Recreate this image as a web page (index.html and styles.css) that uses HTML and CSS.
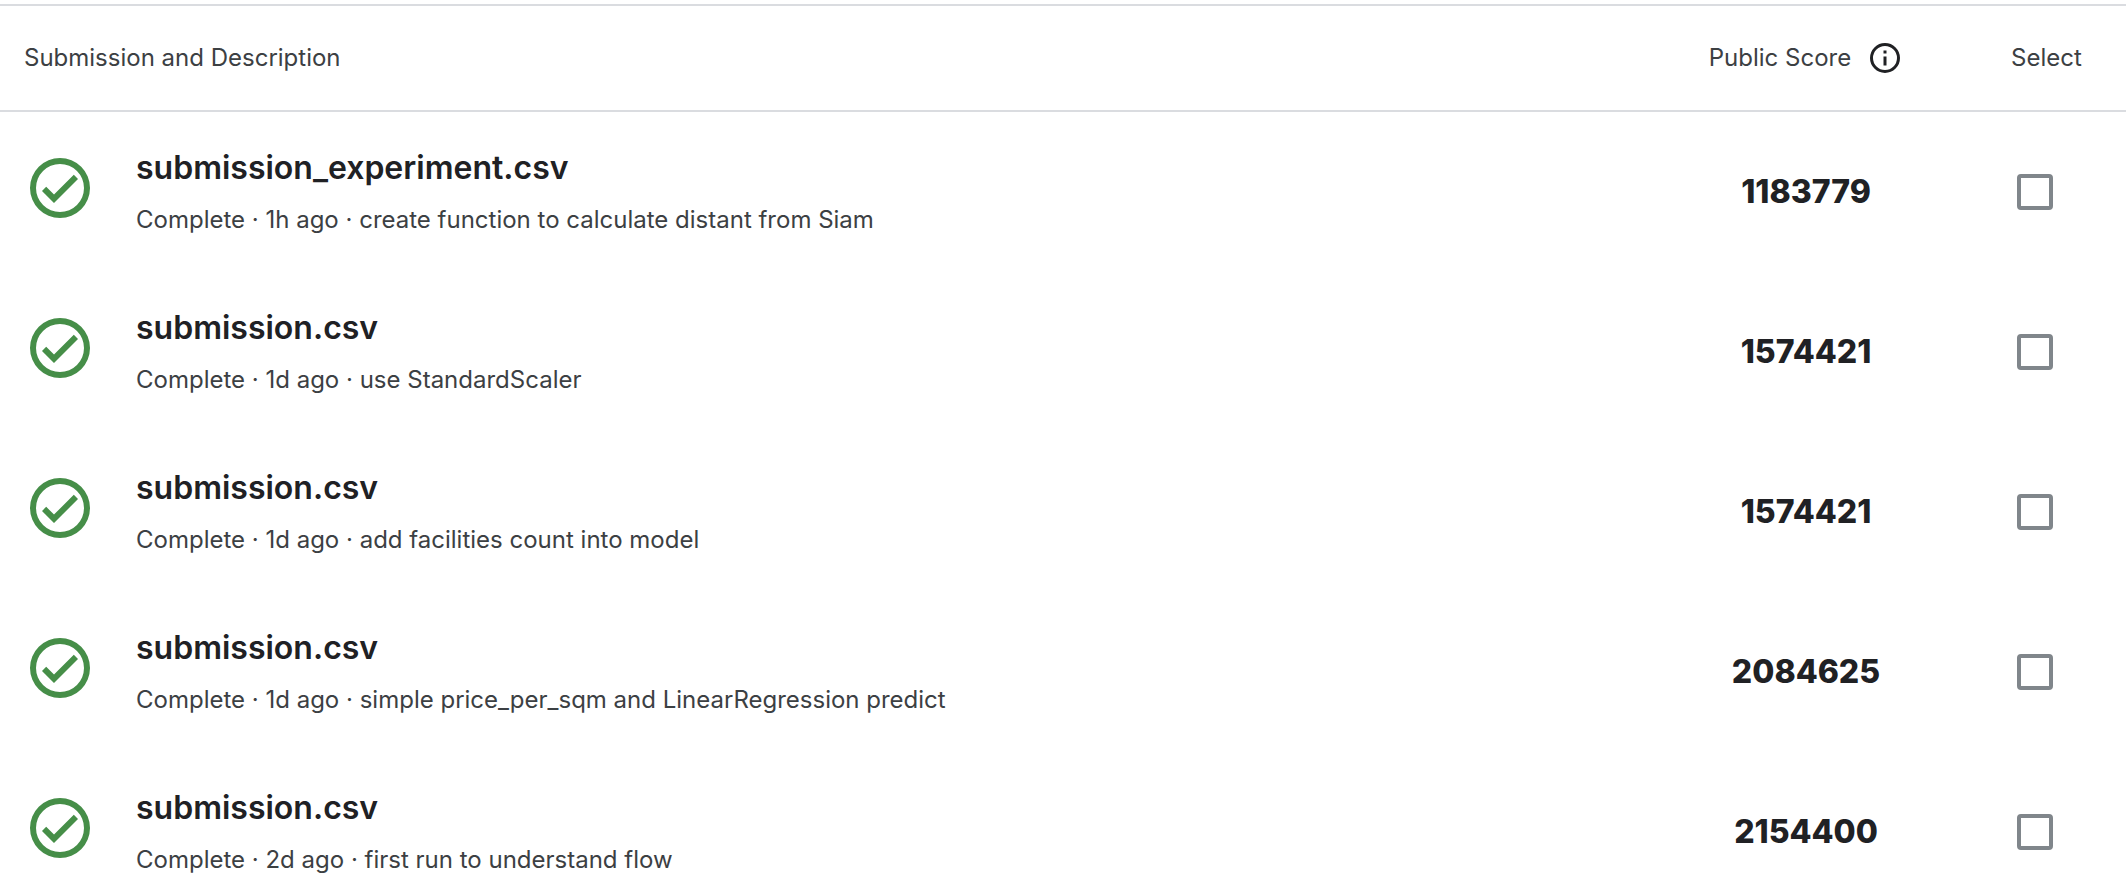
FILE: index.html
```html
<!DOCTYPE html>
<html lang="en">
<head>
<meta charset="utf-8">
<title>Submissions</title>
<link rel="stylesheet" href="styles.css">
</head>
<body>
<svg class="sprite" aria-hidden="true">
  <symbol id="check" viewBox="0 0 24 24">
    <path d="M12 2a10 10 0 1 0 0 20 10 10 0 0 0 0-20zm0 18a8 8 0 1 1 0-16 8 8 0 0 1 0 16z"/>
    <path d="M16.6 7.6 10 14.2 7.4 11.6 6 13l4 4 8-8z"/>
  </symbol>
</svg>
<table class="submissions">
  <thead>
    <tr>
      <th class="main" colspan="2" scope="col">Submission and Description</th>
      <th class="score" scope="col">
        <div class="score-head">Public Score
          <button class="info" type="button" aria-label="About public score">
            <svg viewBox="0 0 24 24" aria-hidden="true"><path d="M11 7h2v2h-2zm0 4h2v6h-2zm1-9a10 10 0 1 0 0 20 10 10 0 0 0 0-20zm0 18a8 8 0 1 1 0-16 8 8 0 0 1 0 16z"/></svg>
          </button>
        </div>
      </th>
      <th class="select" scope="col">Select</th>
    </tr>
  </thead>
  <tbody>
    <tr>
      <td class="status"><svg role="img" aria-label="Complete"><use href="#check"/></svg></td>
      <td class="entry"><div class="name">submission_experiment.csv</div><div class="detail">Complete · 1h ago · create function to calculate distant from Siam</div></td>
      <td class="score">1183779</td>
      <td class="select"><input type="checkbox" aria-label="Select submission 1183779"></td>
    </tr>
    <tr>
      <td class="status"><svg role="img" aria-label="Complete"><use href="#check"/></svg></td>
      <td class="entry"><div class="name">submission.csv</div><div class="detail">Complete · 1d ago · use StandardScaler</div></td>
      <td class="score">1574421</td>
      <td class="select"><input type="checkbox" aria-label="Select use StandardScaler"></td>
    </tr>
    <tr>
      <td class="status"><svg role="img" aria-label="Complete"><use href="#check"/></svg></td>
      <td class="entry"><div class="name">submission.csv</div><div class="detail">Complete · 1d ago · add facilities count into model</div></td>
      <td class="score">1574421</td>
      <td class="select"><input type="checkbox" aria-label="Select add facilities count into model"></td>
    </tr>
    <tr>
      <td class="status"><svg role="img" aria-label="Complete"><use href="#check"/></svg></td>
      <td class="entry"><div class="name">submission.csv</div><div class="detail">Complete · 1d ago · simple price_per_sqm and LinearRegression predict</div></td>
      <td class="score">2084625</td>
      <td class="select"><input type="checkbox" aria-label="Select submission 2084625"></td>
    </tr>
    <tr>
      <td class="status"><svg role="img" aria-label="Complete"><use href="#check"/></svg></td>
      <td class="entry"><div class="name">submission.csv</div><div class="detail">Complete · 2d ago · first run to understand flow</div></td>
      <td class="score">2154400</td>
      <td class="select"><input type="checkbox" aria-label="Select submission 2154400"></td>
    </tr>
  </tbody>
</table>
</body>
</html>
```

FILE: styles.css
```css
* {
  box-sizing: border-box;
}

body {
  margin: 0;
  padding-top: 4px;
  background: #fff;
  color: #202124;
  font-family: Inter, "Liberation Sans", sans-serif;
  font-size: 24px;
  line-height: 32px;
}

.sprite {
  display: none;
}

.submissions {
  width: 100%;
  border-spacing: 0;
}

th {
  padding: 34px 0;
  border-top: 2px solid #dadce0;
  border-bottom: 2px solid #dadce0;
  color: #3c4043;
  font-weight: 400;
  text-align: left;
}

th.main {
  padding-left: 24px;
}

.score {
  width: 240px;
  text-align: center;
}

.select {
  width: 200px;
  padding-left: 85px;
}

.score-head {
  display: flex;
  align-items: center;
  justify-content: center;
  gap: 16px;
  height: 36px;
}

.info {
  width: 36px;
  height: 36px;
  padding: 0;
  border: 0;
  background: none;
  color: #202124;
}

svg {
  display: block;
  width: 100%;
  height: 100%;
  fill: currentColor;
}

td {
  padding: 36px 0;
  vertical-align: top;
}

td.status {
  width: 136px;
  padding: 40px 0 0 24px;
  color: #468e48;
}

.status svg {
  width: 72px;
  height: 72px;
}

.name {
  margin-bottom: 16px;
  font-size: 32px;
  font-weight: 600;
  line-height: 40px;
}

.detail {
  color: #3c4043;
}

td.score {
  padding: 60px 0 0;
  font-size: 32px;
  font-weight: 800;
  line-height: 40px;
}

td.select {
  padding: 62px 0 0 91px;
}

.select input {
  display: block;
  width: 36px;
  height: 36px;
  margin: 0;
  border: 4px solid #80868b;
  border-radius: 4px;
  background: #fff;
  appearance: none;
}

.select input:checked {
  background: #202124;
}

tr:last-child td.entry {
  padding-bottom: 16px;
}
```
